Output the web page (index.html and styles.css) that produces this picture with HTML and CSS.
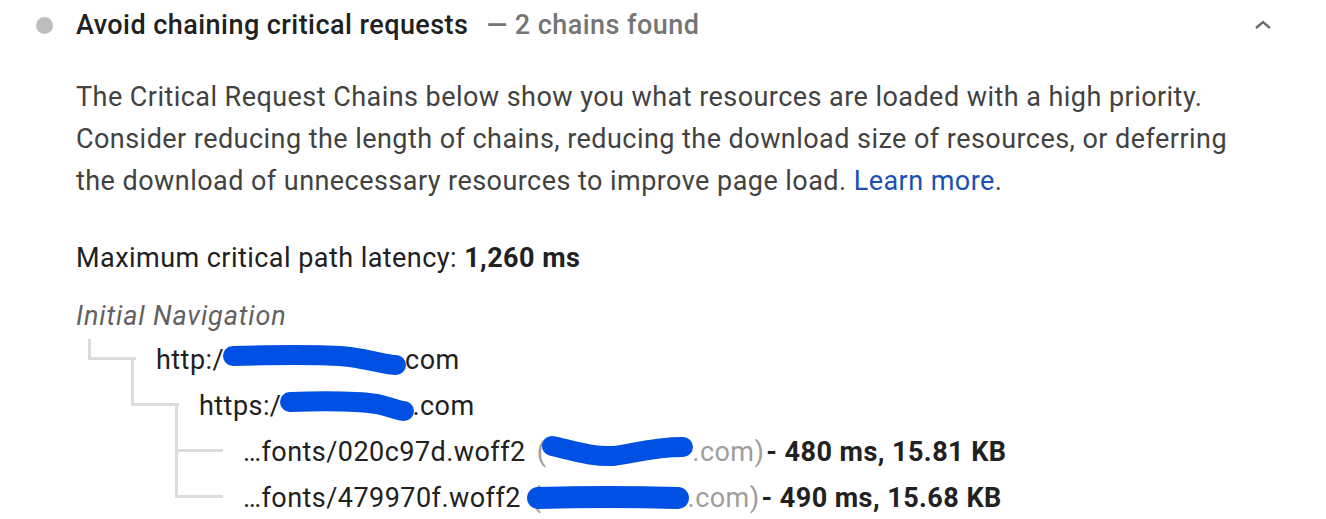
FILE: index.html
```html
<!DOCTYPE html>
<html lang="en">
<head>
    <meta charset="UTF-8">
    <meta name="viewport" content="width=device-width, initial-scale=1.0">
    <title>Avoid chaining critical requests</title>
    <link rel="stylesheet" href="styles.css">
</head>
<body>
    <div class="audit">
        <div class="audit-header">
            <span class="audit-icon"></span>
            <span class="audit-title">Avoid chaining critical requests</span>
            <span class="audit-display">&mdash; 2 chains found</span>
            <svg class="chevron" width="20" height="12" viewBox="0 0 20 12">
                <path d="M3 9 L10 3 L17 9" fill="none" stroke="#6b6b6b" stroke-width="2.4"/>
            </svg>
        </div>

        <div class="audit-body">
            <p class="description">The Critical Request Chains below show you what resources are loaded with a high priority. Consider reducing the length of chains, reducing the download size of resources, or deferring the download of unnecessary resources to improve page load. <a href="#">Learn more</a>.</p>

            <p class="latency">Maximum critical path latency: <b>1,260 ms</b></p>

            <div class="crc-tree">
                <div class="crc-root">Initial Navigation</div>

                <div class="node depth-0 first">
                    <span class="branch"></span>
                    <span class="url">http:/<svg class="redact" width="186" height="34" viewBox="0 0 186 34"><path d="M11 13 C50 12 100 11 128 14 C150 17 165 22 174 22" fill="none" stroke="#0050e3" stroke-width="20" stroke-linecap="round"/></svg>com</span>
                </div>

                <div class="node depth-1">
                    <span class="branch"></span>
                    <span class="url">https:/<svg class="redact" width="136" height="32" viewBox="0 0 136 32"><path d="M11 12 C40 11 78 11 98 14 C112 17 120 21 125 21" fill="none" stroke="#0050e3" stroke-width="20" stroke-linecap="round"/></svg>.com</span>
                </div>

                <div class="node depth-2">
                    <span class="branch"></span>
                    <span class="url">&hellip;fonts/020c97d.woff2</span>
                    <span class="host">(<svg class="redact" width="153" height="34" viewBox="0 0 153 34"><path d="M11 11 C30 15 50 22 72 21 C92 19 110 12 142 12" fill="none" stroke="#0050e3" stroke-width="20" stroke-linecap="round"/></svg>.com)</span>
                    <span class="stats">- 480 ms, 15.81 KB</span>
                </div>

                <div class="node depth-2">
                    <span class="branch"></span>
                    <span class="url">&hellip;fonts/479970f.woff2</span>
                    <span class="host">(<svg class="redact over-paren" width="164" height="30" viewBox="0 0 164 30"><path d="M12 15 C50 14 112 14 152 15" fill="none" stroke="#0050e3" stroke-width="22" stroke-linecap="round"/></svg>.com)</span>
                    <span class="stats">- 490 ms, 15.68 KB</span>
                </div>
            </div>
        </div>
    </div>
</body>
</html>
```

FILE: styles.css
```css
body {
    margin: 0;
    background-color: #ffffff;
    font-family: Roboto, "Noto Sans", Arial, sans-serif;
    font-size: 27px;
    letter-spacing: 0.45px;
    color: #212121;
}
.audit {
    width: 1326px;
    padding-left: 36px;
    box-sizing: border-box;
}
.audit-header {
    display: flex;
    align-items: center;
    height: 50px;
}
.audit-icon {
    width: 17px;
    height: 17px;
    border-radius: 50%;
    background-color: #bdbdbd;
    margin-right: 23px;
}
.audit-title {
    font-weight: 500;
    color: #212121;
}
.audit-display {
    margin-left: 18px;
    color: #757575;
    font-weight: 500;
}
.chevron {
    margin-left: auto;
    margin-right: 53px;
}
.audit-body {
    padding-left: 40px;
    width: 1180px;
}
p {
    margin: 0;
}
.description {
    margin-top: 26px;
    line-height: 42px;
    color: #424242;
}
.description a {
    color: #1a4fb5;
    text-decoration: none;
}
.latency {
    margin-top: 35px;
    line-height: 42px;
    color: #212121;
}
.latency b {
    font-weight: 700;
}
.crc-tree {
    margin-top: 16px;
}
.crc-root {
    line-height: 42px;
    font-style: italic;
    letter-spacing: 0.85px;
    color: #616161;
}
.node {
    display: flex;
    align-items: center;
    height: 46px;
    white-space: nowrap;
    color: #212121;
}
.depth-0 {
    padding-left: 12px;
}
.depth-1 {
    padding-left: 55px;
}
.depth-2 {
    padding-left: 99px;
}
/* connector: vertical from the parent row's middle, then across */
.branch {
    position: relative;
    flex: none;
    width: 48px;
    height: 46px;
    margin-right: 20px;
}
.branch::before {
    content: "";
    position: absolute;
    left: 0;
    top: -24px;
    width: 3px;
    height: 47px;
    background-color: #dcdcdc;
}
.branch::after {
    content: "";
    position: absolute;
    left: 0;
    top: 20px;
    width: 48px;
    height: 3px;
    background-color: #dcdcdc;
}
.first .branch::before {
    top: 2px;
    height: 21px;
}
.url {
    display: inline-flex;
    align-items: center;
}
.redact {
    margin: 0 -3px 0 -2px;
}
.host {
    display: inline-flex;
    align-items: center;
    margin-left: 11px;
    color: #9e9e9e;
}
.host .redact {
    margin: 0 -2px 0 -5px;
}
.host .redact.over-paren {
    margin-left: -16px;
}
.stats {
    margin-left: 2px;
    font-weight: 700;
    color: #212121;
}
```
